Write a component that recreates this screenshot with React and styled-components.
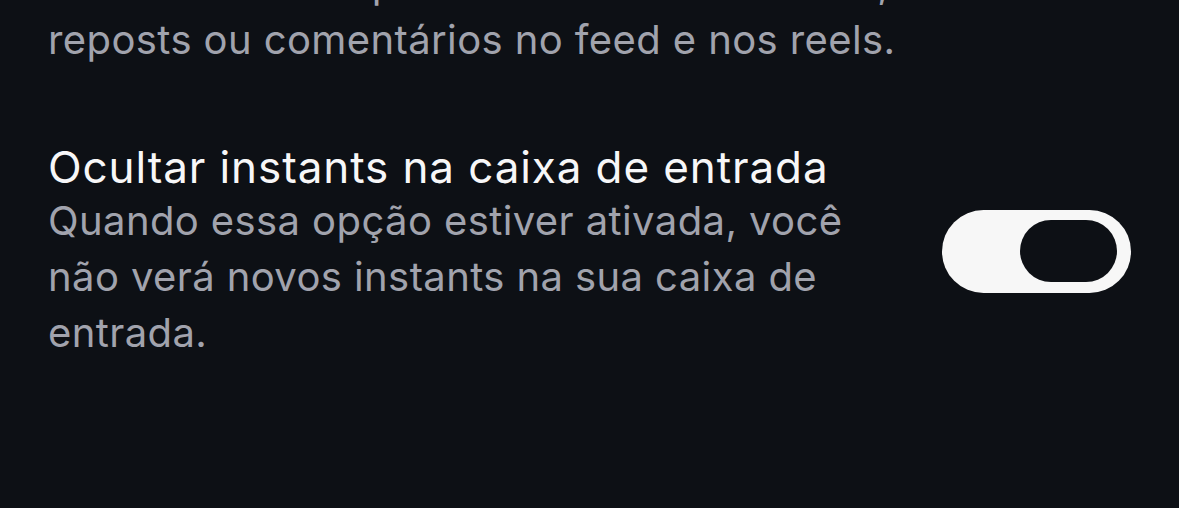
import React, { useState } from "react"
import styled, { createGlobalStyle } from "styled-components"

const GlobalStyle = createGlobalStyle`
  html, body {
    margin: 0;
    padding: 0;
    background: #0d1015;
  }
  body {
    font-family: Inter, "Noto Sans", "Liberation Sans", sans-serif;
    -webkit-font-smoothing: antialiased;
  }
`

const Page = styled.div`
  width: 1179px;
  height: 508px;
  overflow: hidden;
  background: #0d1015;
  padding: 0 48px;
  box-sizing: border-box;
`

// the previous setting's text, scrolled mostly out of view
const PrevBlock = styled.div`
  margin-top: -44px;
`

const Description = styled.p`
  margin: 0;
  color: #a1a3ad;
  font-size: 40px;
  line-height: 56px;
  letter-spacing: 0.4px;
`

const SettingRow = styled.div`
  display: flex;
  align-items: center;
  justify-content: space-between;
  margin-top: 73px;
`

const TextCol = styled.div`
  display: flex;
  flex-direction: column;
  width: 830px;
`

const Title = styled.h2`
  margin: 0;
  color: #f7f7f8;
  font-size: 44px;
  font-weight: 400;
  line-height: 52px;
  letter-spacing: 0.9px;
  white-space: nowrap;
`

const Toggle = styled.button`
  flex: none;
  width: 189px;
  height: 83px;
  border: 0;
  padding: 0 14px 0 0;
  border-radius: 42px;
  background: #f7f7f7;
  display: flex;
  align-items: center;
  justify-content: ${(p) => (p.$on ? "flex-end" : "flex-start")};
  cursor: pointer;
`

const Knob = styled.span`
  width: 97px;
  height: 62px;
  border-radius: 31px;
  background: #0d1015;
`

export default function App() {
  const [on, setOn] = useState(true)
  return (
    <>
      <GlobalStyle />
      <Page>
        <PrevBlock>
          <Description>
            Você não verá o placar de curtidas e views,
            <br />
            reposts ou comentários no feed e nos reels.
          </Description>
        </PrevBlock>
        <SettingRow>
          <TextCol>
            <Title>Ocultar instants na caixa de entrada</Title>
            <Description>
              Quando essa opção estiver ativada, você não verá novos instants na
              sua caixa de entrada.
            </Description>
          </TextCol>
          <Toggle $on={on} onClick={() => setOn(!on)} aria-pressed={on}>
            <Knob />
          </Toggle>
        </SettingRow>
      </Page>
    </>
  )
}
